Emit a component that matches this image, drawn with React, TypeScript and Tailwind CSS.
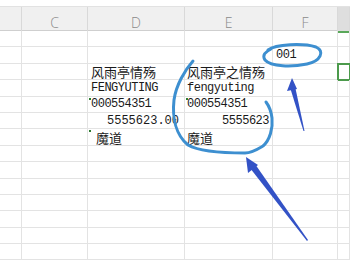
import React from 'react'

const cols = ['B', 'C', 'D', 'E', 'F', 'G']

type Cell = { text?: string; cjk?: boolean; right?: boolean; pad?: string; size?: string; mark?: boolean }

// 行データ（D列・E列・F列）
const rows: Record<number, Record<string, Cell>> = {
  1: { F: { text: '001', pad: 'pl-[3px]' } },
  2: {
    D: { text: '风雨亭情殇', cjk: true, pad: 'pl-[3px]' },
    E: { text: '风雨亭之情殇', cjk: true, pad: 'pl-[2px]' },
  },
  3: {
    D: { text: 'FENGYUTING', pad: 'pl-[3px]' },
    E: { text: 'fengyuting', pad: 'pl-[2px]' },
  },
  4: {
    D: { text: '000554351', pad: 'pl-[3px]', mark: true },
    E: { text: '000554351', pad: 'pl-[2px]', mark: true },
  },
  5: {
    D: { text: '5555623.00', right: true, pad: 'pr-[5px]', size: 'text-[12px] tracking-[0px]' },
    E: { text: '5555623', right: true, pad: 'pr-[3px]' },
  },
  6: {
    D: { text: '魔道', cjk: true, pad: 'pl-[8px]', mark: true },
    E: { text: '魔道', cjk: true, pad: 'pl-[2px]' },
  },
}

const widths = 'grid-cols-[22px_66px_97px_88px_65px_1fr]'

const App: React.FC = () => {
  return (
    <div className="relative w-[350px] h-[260px] overflow-hidden bg-white">
      {/* 上部の余白 */}
      <div className="h-[7px] border-b border-[#e2e2e2] bg-white" />

      {/* 列ヘッダー */}
      <div className={`grid ${widths} h-[24px] bg-[#f0f0f0] border-b border-[#cfcfcf]`}>
        {cols.map((c) => (
          <div
            key={c}
            className={`flex items-center justify-center border-r border-[#d9d9d9] pt-[5px] text-[14px] font-light text-[#8a8a8a] font-['Open_Sans',sans-serif] ${
              c === 'G' ? 'bg-[#dedede] border-b-2 border-b-[#5aa85a]' : ''
            }`}
          >
            {c === 'B' || c === 'G' ? '' : c}
          </div>
        ))}
      </div>

      {/* 本体 */}
      <div className="flex flex-col">
        {Array.from({ length: 14 }).map((_, r) => (
          <div key={r} className={`grid ${widths} h-[16.4px]`}>
            {cols.map((c) => {
              const cell = rows[r]?.[c]
              const selected = r === 2 && c === 'G'
              return (
                <div
                  key={c}
                  className={`relative flex items-center whitespace-nowrap border-r border-b border-[#e3e3e3] text-[#1a1a1a] ${
                    cell?.right ? 'justify-end' : ''
                  } ${cell?.pad ?? ''} ${selected ? 'outline-2 -outline-offset-1 outline-[#4c9a4c]' : ''}`}
                >
                  {cell?.mark && (
                    <span className="absolute left-[1px] top-[1px] w-[2px] h-[2px] bg-[#2f7d32]" />
                  )}
                  {cell?.text && (
                    <span
                      className={
                        cell.cjk
                          ? "text-[13px] leading-none font-['Noto_Sans_CJK_SC',sans-serif]"
                          : `${cell.size ?? 'text-[12px] tracking-[-0.5px]'} leading-none font-['Liberation_Mono',monospace]`
                      }
                    >
                      {cell.text}
                    </span>
                  )}
                </div>
              )
            })}
          </div>
        ))}
      </div>

      {/* 手書きの注釈 */}
      <svg className="absolute inset-0 pointer-events-none" width="350" height="260" viewBox="0 0 350 260">
        <path
          d="M268,50 C276,44 303,43 316,47 C325,51 321,61 307,64 C292,67 271,67 265,60 C262,55 265,52 271,49"
          fill="none"
          stroke="#3d8fd0"
          strokeWidth="3"
          strokeLinecap="round"
        />
        <path
          d="M193,61 C185,70 176,85 174,100 C172,118 176,135 188,145 C200,152 225,153 245,153 C252,153 258,149 263,146 C270,140 273,128 272,118 C271,110 269,106 266,102"
          fill="none"
          stroke="#3d8fd0"
          strokeWidth="3"
          strokeLinecap="round"
        />
        <g fill="#3352c6">
          <polygon points="292,78 287,91 297,89" />
          <polygon points="290.5,89 295.5,88.5 304.5,131 303.5,131" />
          <polygon points="246,157 248,173 258,165" />
          <polygon points="250,168 255,164 308,240 307,241" />
        </g>
      </svg>
    </div>
  )
}

export default App
